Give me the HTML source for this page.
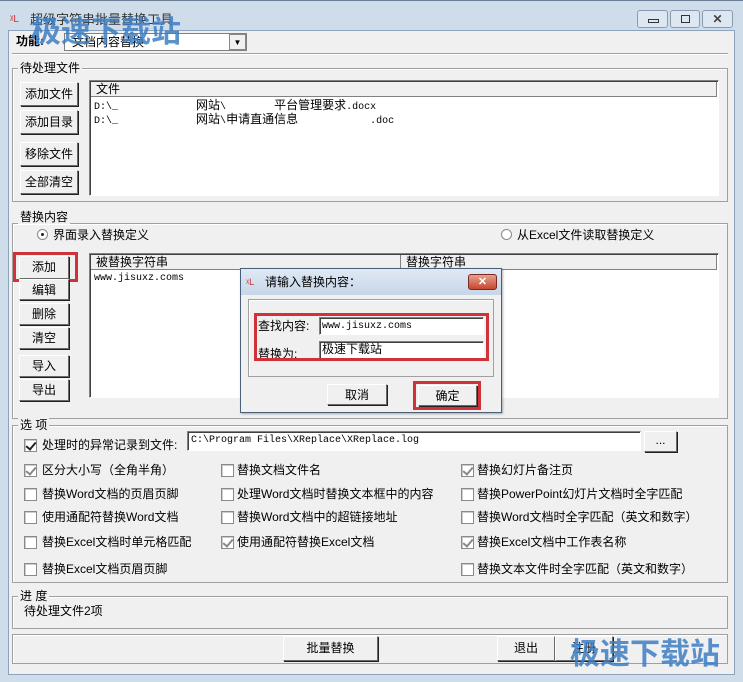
<!DOCTYPE html>
<html><head><meta charset="utf-8"><style>
*{box-sizing:border-box;margin:0;padding:0}
body{width:743px;height:682px;overflow:hidden;background:#cfdcea;font-family:"Liberation Sans","Noto Sans CJK SC",sans-serif;font-size:12px;color:#000;position:relative}
.a{position:absolute}
.t{position:absolute;white-space:nowrap;line-height:14px}
.grp{position:absolute;border:1px solid #a0a0a0;box-shadow:inset 1px 1px 0 #fff}
.lbl{position:absolute;background:#f0f0f0;padding:0 2px;line-height:14px;white-space:nowrap}
.btn{position:absolute;background:#f0f0f0;border:1px solid;border-color:#fff #696969 #696969 #fff;box-shadow:1px 1px 0 #222;text-align:center;line-height:20px;white-space:nowrap}
.list{position:absolute;background:#fff;border:1px solid;border-color:#808080 #fff #fff #808080;box-shadow:inset 1px 1px 0 #404040}
.hdr{position:absolute;background:#f0f0f0;border-bottom:1px solid #808080;border-right:1px solid #808080;line-height:15px;padding-left:5px}
.cb{position:absolute;width:13px;height:13px;background:#fff;border:1px solid #8a8a8a;box-shadow:inset 1px 1px 0 #ccc}
.cb.on::after{content:"";position:absolute;left:3px;top:0px;width:4px;height:8px;border:solid #222;border-width:0 2px 2px 0;transform:rotate(40deg)}
.cb.g::after{border-color:#888}
.mono{font-family:"Liberation Mono",monospace;font-size:10px}
.red{position:absolute;border:3px solid #d0323a}
.wm{position:absolute;color:#3e7fc4;font-weight:bold;font-size:30px;font-family:"Noto Sans CJK SC",sans-serif;line-height:36px;opacity:.85;white-space:nowrap}
</style></head><body>
<div class="a" style="left:8px;top:30px;width:727px;height:645px;background:#f0f0f0;border:1px solid #8da2bb"></div>
<div class="a" style="left:0;top:0;width:743px;height:1px;background:#6b7f95"></div>
<!-- title -->
<div class="t" style="left:10px;top:13px;color:#c33;font-size:10px">ᵡL</div>
<div class="t" style="left:30px;top:13px;color:#333;font-size:13px">超级字符串批量替换工具</div>
<div class="a" style="left:637px;top:10px;width:31px;height:18px;border:1px solid #8a9bb0;border-radius:3px;background:#dde7f2"><div class="a" style="left:10px;top:8px;width:11px;height:4px;border:1px solid #333"></div></div>
<div class="a" style="left:670px;top:10px;width:30px;height:18px;border:1px solid #8a9bb0;border-radius:3px;background:#dde7f2"><div class="a" style="left:10px;top:4px;width:9px;height:8px;border:1px solid #333"></div></div>
<div class="a" style="left:702px;top:10px;width:31px;height:18px;border:1px solid #8a9bb0;border-radius:3px;background:#dde7f2;text-align:center;line-height:16px;font-weight:bold;color:#444">✕</div>
<!-- function -->
<div class="t" style="left:16px;top:34px;font-weight:bold">功能:</div>
<div class="a" style="left:64px;top:33px;width:183px;height:18px;background:#fff;border:1px solid #808080"></div>
<div class="t" style="left:72px;top:35px">文档内容替换</div>
<div class="a" style="left:229px;top:34px;width:17px;height:16px;background:#f0f0f0;border:1px solid #888;font-size:8px;text-align:center;line-height:15px">▼</div>
<div class="a" style="left:12px;top:53px;width:716px;height:2px;border-top:1px solid #a0a0a0;border-bottom:1px solid #fff"></div>
<div class="wm" style="left:31px;top:11px">极速下载站</div>
<!-- group 1 -->
<div class="grp" style="left:12px;top:68px;width:716px;height:134px"></div>
<div class="lbl" style="left:18px;top:61px">待处理文件</div>
<div class="btn" style="left:20px;top:82px;width:58px;height:24px;line-height:22px">添加文件</div>
<div class="btn" style="left:20px;top:110px;width:58px;height:24px;line-height:22px">添加目录</div>
<div class="btn" style="left:20px;top:142px;width:58px;height:24px;line-height:22px">移除文件</div>
<div class="btn" style="left:20px;top:170px;width:58px;height:24px;line-height:22px">全部清空</div>
<div class="list" style="left:89px;top:80px;width:630px;height:116px"></div>
<div class="hdr" style="left:91px;top:82px;width:626px;height:15px">文件</div>
<div class="t mono" style="left:94px;top:98px">D:\_&nbsp;&nbsp;&nbsp;&nbsp;&nbsp;&nbsp;&nbsp;&nbsp;&nbsp;&nbsp;&nbsp;&nbsp;&nbsp;<span style="font-size:12px;font-family:'Noto Sans CJK SC'">网站</span>\&nbsp;&nbsp;&nbsp;&nbsp;&nbsp;&nbsp;&nbsp;&nbsp;<span style="font-size:12px;font-family:'Noto Sans CJK SC'">平台管理要求</span>.docx</div>
<div class="t mono" style="left:94px;top:112px">D:\_&nbsp;&nbsp;&nbsp;&nbsp;&nbsp;&nbsp;&nbsp;&nbsp;&nbsp;&nbsp;&nbsp;&nbsp;&nbsp;<span style="font-size:12px;font-family:'Noto Sans CJK SC'">网站</span>\<span style="font-size:12px;font-family:'Noto Sans CJK SC'">申请直通信息</span>&nbsp;&nbsp;&nbsp;&nbsp;&nbsp;&nbsp;&nbsp;&nbsp;&nbsp;&nbsp;&nbsp;&nbsp;.doc</div>
<!-- group 2 -->
<div class="grp" style="left:12px;top:223px;width:716px;height:196px"></div>
<div class="lbl" style="left:18px;top:210px">替换内容</div>
<div class="a" style="left:37px;top:229px;width:11px;height:11px;border-radius:50%;border:1px solid #888;background:#fff"><div class="a" style="left:3px;top:3px;width:3px;height:3px;border-radius:50%;background:#222"></div></div>
<div class="t" style="left:53px;top:228px">界面录入替换定义</div>
<div class="a" style="left:501px;top:229px;width:11px;height:11px;border-radius:50%;border:1px solid #888;background:#fff"></div>
<div class="t" style="left:517px;top:228px">从Excel文件读取替换定义</div>
<div class="btn" style="left:19px;top:256px;width:50px;height:23px">添加</div>
<div class="red" style="left:13px;top:252px;width:65px;height:30px"></div>
<div class="btn" style="left:19px;top:279px;width:50px;height:21px">编辑</div>
<div class="btn" style="left:19px;top:303px;width:50px;height:22px">删除</div>
<div class="btn" style="left:19px;top:327px;width:50px;height:22px">清空</div>
<div class="btn" style="left:19px;top:355px;width:50px;height:22px">导入</div>
<div class="btn" style="left:19px;top:379px;width:50px;height:22px">导出</div>
<div class="list" style="left:89px;top:253px;width:630px;height:145px"></div>
<div class="hdr" style="left:91px;top:255px;width:310px;height:15px">被替换字符串</div>
<div class="hdr" style="left:401px;top:255px;width:316px;height:15px">替换字符串</div>
<div class="t mono" style="left:94px;top:272px">www.jisuxz.coms</div>
<!-- group 3 options -->
<div class="grp" style="left:12px;top:425px;width:716px;height:158px"></div>
<div class="lbl" style="left:18px;top:418px">选 项</div>
<div class="cb on" style="left:24px;top:439px"></div>
<div class="t" style="left:42px;top:438px">处理时的异常记录到文件:</div>
<div class="list" style="left:187px;top:431px;width:454px;height:20px"></div>
<div class="t mono" style="left:191px;top:434px">C:\Program Files\XReplace\XReplace.log</div>
<div class="btn" style="left:644px;top:431px;width:33px;height:21px;line-height:16px">...</div>
<div class="cb on g" style="left:24px;top:464px"></div><div class="t" style="left:42px;top:463px">区分大小写（全角半角）</div>
<div class="cb" style="left:221px;top:464px"></div><div class="t" style="left:237px;top:463px">替换文档文件名</div>
<div class="cb on g" style="left:461px;top:464px"></div><div class="t" style="left:477px;top:463px">替换幻灯片备注页</div>
<div class="cb" style="left:24px;top:488px"></div><div class="t" style="left:42px;top:487px">替换Word文档的页眉页脚</div>
<div class="cb" style="left:221px;top:488px"></div><div class="t" style="left:237px;top:487px">处理Word文档时替换文本框中的内容</div>
<div class="cb" style="left:461px;top:488px"></div><div class="t" style="left:477px;top:487px">替换PowerPoint幻灯片文档时全字匹配</div>
<div class="cb" style="left:24px;top:511px"></div><div class="t" style="left:42px;top:510px">使用通配符替换Word文档</div>
<div class="cb" style="left:221px;top:511px"></div><div class="t" style="left:237px;top:510px">替换Word文档中的超链接地址</div>
<div class="cb" style="left:461px;top:511px"></div><div class="t" style="left:477px;top:510px">替换Word文档时全字匹配（英文和数字）</div>
<div class="cb" style="left:24px;top:536px"></div><div class="t" style="left:42px;top:535px">替换Excel文档时单元格匹配</div>
<div class="cb on g" style="left:221px;top:536px"></div><div class="t" style="left:237px;top:535px">使用通配符替换Excel文档</div>
<div class="cb on g" style="left:461px;top:536px"></div><div class="t" style="left:477px;top:535px">替换Excel文档中工作表名称</div>
<div class="cb" style="left:24px;top:563px"></div><div class="t" style="left:42px;top:562px">替换Excel文档页眉页脚</div>
<div class="cb" style="left:461px;top:563px"></div><div class="t" style="left:477px;top:562px">替换文本文件时全字匹配（英文和数字）</div>
<!-- progress -->
<div class="grp" style="left:12px;top:596px;width:716px;height:33px"></div>
<div class="lbl" style="left:18px;top:589px">进 度</div>
<div class="t" style="left:24px;top:604px">待处理文件2项</div>
<div class="grp" style="left:12px;top:634px;width:716px;height:30px"></div>
<div class="btn" style="left:283px;top:636px;width:95px;height:25px;line-height:23px">批量替换</div>
<div class="btn" style="left:497px;top:636px;width:58px;height:25px;line-height:23px">退出</div>
<div class="btn" style="left:555px;top:636px;width:58px;height:25px;line-height:23px">注册</div>
<div class="wm" style="left:570px;top:633px">极速下载站</div>
<!-- dialog -->
<div class="a" style="left:240px;top:268px;width:262px;height:145px;background:#f0f0f0;border:1px solid #4a5f78;box-shadow:1px 1px 2px rgba(0,0,0,.3)"></div>
<div class="a" style="left:241px;top:269px;width:260px;height:26px;background:linear-gradient(#dfe9f5,#c7d6e8)"></div>
<div class="t" style="left:246px;top:275px;color:#c33;font-size:9px">ᵡL</div>
<div class="t" style="left:265px;top:275px">请输入替换内容：</div>
<div class="a" style="left:468px;top:274px;width:29px;height:16px;border:1px solid #7a2a20;border-radius:3px;background:linear-gradient(#e8a090,#c5482f);color:#fff;text-align:center;font-weight:bold;line-height:14px;font-size:11px">✕</div>
<div class="grp" style="left:248px;top:299px;width:246px;height:78px"></div>
<div class="t" style="left:258px;top:319px">查找内容:</div>
<div class="list" style="left:319px;top:317px;width:165px;height:18px"></div>
<div class="t mono" style="left:322px;top:320px">www.jisuxz.coms</div>
<div class="t" style="left:258px;top:347px">替换为:</div>
<div class="list" style="left:319px;top:341px;width:165px;height:18px"></div>
<div class="t" style="left:322px;top:342px">极速下载站</div>
<div class="red" style="left:254px;top:313px;width:235px;height:48px"></div>
<div class="btn" style="left:327px;top:384px;width:60px;height:21px">取消</div>
<div class="btn" style="left:418px;top:385px;width:59px;height:21px">确定</div>
<div class="red" style="left:413px;top:381px;width:68px;height:29px"></div>
</body></html>
